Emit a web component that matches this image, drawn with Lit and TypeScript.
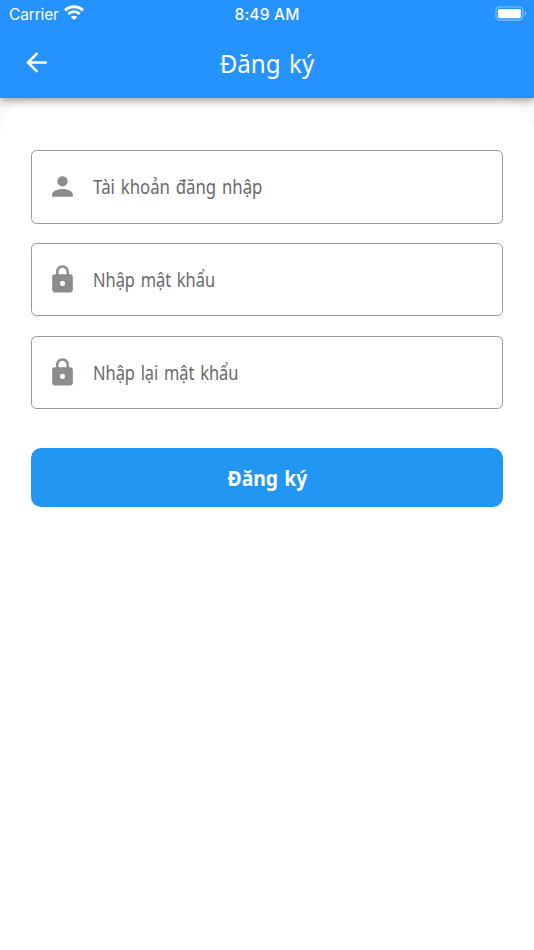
import { LitElement, html, css, svg } from "lit";
import { customElement, property } from "lit/decorators.js";
import { styleMap } from "lit/directives/style-map.js";

const PERSON = svg`<path d="M12 12c2.21 0 4-1.79 4-4s-1.79-4-4-4-4 1.79-4 4 1.79 4 4 4zm0 2c-2.67 0-8 1.34-8 4v2h16v-2c0-2.66-5.33-4-8-4z"/>`;
const LOCK = svg`<path d="M18 8h-1V6c0-2.76-2.24-5-5-5S7 3.240 7 6v2H6c-1.100 0-2 .9-2 2v10c0 1.100.9 2 2 2h12c1.100 0 2-.9 2-2V10c0-1.100-.9-2-2-2zm-6 9c-1.100 0-2-.9-2-2s.9-2 2-2 2 .9 2 2-.9 2-2 2zm3.100-9H8.900V6c0-1.710 1.390-3.100 3.100-3.100s3.100 1.390 3.100 3.100v2z"/>`;

@customElement("form-field")
export class FormField extends LitElement {
  @property() icon = "lock";
  @property() label = "";
  @property({ type: Number }) stretch = 0.865;

  static styles = css`
    :host {
      display: flex;
      align-items: center;
      box-sizing: border-box;
      height: 73.6px;
      padding-left: 14.5px;
      border: 1.3px solid #999;
      border-radius: 5.5px;
      color: #696969;
      font: 19px/28px "Noto Sans", sans-serif;
    }
    svg {
      width: 31px;
      height: 31px;
      margin-right: 15px;
      fill: #8c8c8c;
      flex: none;
    }
    .label {
      margin-top: 1px;
      white-space: nowrap;
      word-spacing: 1.6px;
      transform-origin: left;
    }
  `;

  render() {
    return html`
      <svg viewBox="0 0 24 24">${this.icon === "person" ? PERSON : LOCK}</svg>
      <span class="label" style=${styleMap({ transform: `scaleX(${this.stretch})` })}>${this.label}</span>
    `;
  }
}

@customElement("app-root")
export class AppRoot extends LitElement {
  static styles = css`
    :host {
      display: flex;
      flex-direction: column;
      height: 950px;
      background: #fafafa;
      font-family: "Noto Sans", sans-serif;
      overflow: hidden;
    }
    header {
      position: relative;
      z-index: 1;
      flex: none;
      height: 98px;
      background: #2492ff;
      color: #fff;
      box-shadow: 0 2.6px 5.2px -1.3px rgba(0, 0, 0, 0.2),
        0 5.2px 6.5px rgba(0, 0, 0, 0.14), 0 1.3px 13px rgba(0, 0, 0, 0.12);
    }
    .status,
    .bar {
      display: grid;
      grid-template-columns: 1fr auto 1fr;
      align-items: center;
    }
    .status {
      height: 27px;
      padding: 0 7px 0 9px;
      font: 15.5px/27px Inter, sans-serif;
    }
    .carrier {
      display: flex;
      align-items: center;
      gap: 5px;
    }
    .carrier span {
      padding-top: 1px;
      letter-spacing: -0.15px;
    }
    .wifi {
      width: 20px;
      height: 15px;
      margin-top: -3px;
    }
    .time {
      padding-top: 1px;
      margin-left: -2px;
      font-weight: 500;
      letter-spacing: 0.2px;
    }
    .battery {
      justify-self: end;
      width: 32px;
      height: 16px;
    }
    .bar {
      height: 71px;
      padding: 0 21px;
    }
    .back {
      width: 31px;
      height: 31px;
      fill: #fff;
    }
    h1 {
      margin: 0;
      font-size: 26px;
      line-height: 36px;
      font-weight: 400;
      word-spacing: 2.4px;
      transform: scaleX(0.928);
    }
    main {
      flex: 1;
      display: flex;
      flex-direction: column;
      gap: 19.3px;
      padding: 52px 31px 0;
      background: #fff;
      border-radius: 39px 39px 0 0;
    }
    button {
      height: 59px;
      margin-top: 19.5px;
      padding: 0;
      border: 0;
      border-radius: 10px;
      background: #2196f3;
      color: #fff;
      font: 700 20.5px/28px "Noto Sans", sans-serif;
    }
    button span {
      display: inline-block;
      word-spacing: 1.5px;
      transform: scaleX(0.94);
    }
  `;

  render() {
    return html`
      <header>
        <div class="status">
          <div class="carrier">
            <span>Carrier</span>
            <svg class="wifi" viewBox="0 0 20 15" fill="none" stroke="#fff">
              <path d="M1.100 5.400C6 .5 14 .5 18.900 5.400" stroke-width="3" />
              <path d="M4.300 8.900C7.500 5.900 12.500 5.900 15.700 8.900" stroke-width="2.800" />
              <path d="M10 15 6.700 11.900C8.500 10.200 11.500 10.200 13.300 11.900Z" fill="#fff" stroke="none" />
            </svg>
          </div>
          <div class="time">8:49 AM</div>
          <svg class="battery" viewBox="0 0 32 16">
            <rect x="1" y="1" width="26.800" height="13.200" rx="3.600" fill="none" stroke="#fff" stroke-opacity=".45" stroke-width="1.200" />
            <rect x="2.900" y="2.900" width="23" height="9.400" rx="1.600" fill="#fff" />
            <path d="M29.800 5.300q3 2.300 0 4.600z" fill="#fff" opacity=".5" />
          </svg>
        </div>
        <div class="bar">
          <svg class="back" viewBox="0 0 24 24">
            <path d="M20 11H7.830l5.590-5.590L12 4l-8 8 8 8 1.410-1.410L7.830 13H20v-2z" />
          </svg>
          <h1>Đăng ký</h1>
        </div>
      </header>
      <main>
        <form-field icon="person" label="Tài khoản đăng nhập" stretch="0.883"></form-field>
        <form-field label="Nhập mật khẩu"></form-field>
        <form-field label="Nhập lại mật khẩu"></form-field>
        <button type="button"><span>Đăng ký</span></button>
      </main>
    `;
  }
}
